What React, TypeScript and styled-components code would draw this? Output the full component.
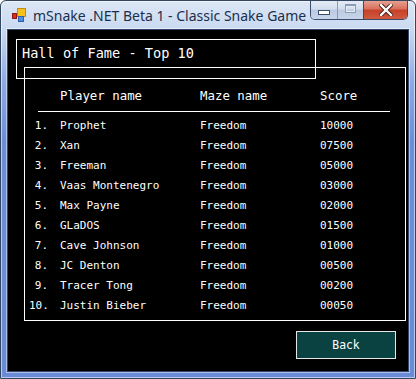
import React from 'react';
import styled, { createGlobalStyle } from 'styled-components';

const GlobalStyle = createGlobalStyle`
  html, body {
    margin: 0;
    padding: 0;
    background: #ffffff;
  }
  * {
    box-sizing: border-box;
  }
`;

const WINDOW = styled.div`
  width: 416px;
  height: 379px;
  border: 1px solid #33465f;
  border-radius: 6px 6px 0 0;
  background: linear-gradient(to bottom, #dde7f5 0px, #c9d9f0 28px, #8eabe4 80px, #6c8ed9 140px, #6a8bd8 100%);
  display: flex;
  flex-direction: column;
  overflow: hidden;
  box-shadow: inset 0 0 0 1px rgba(255, 255, 255, 0.55);
`;

const TITLEBAR = styled.div`
  height: 29px;
  display: flex;
  align-items: flex-start;
  padding: 0 7px 0 10px;
`;

const APPICON = styled.svg`
  width: 16px;
  height: 16px;
  margin-top: 7px;
  flex-shrink: 0;
`;

const TITLE = styled.div`
  margin: 5px 0 0 6px;
  font-family: "Noto Sans", "Open Sans", sans-serif;
  font-size: 14px;
  line-height: 20px;
  color: #1b2f4d;
  white-space: nowrap;
  overflow: hidden;
  flex: 1;
`;

const CAPTIONS = styled.div`
  display: flex;
  height: 20px;
  margin-top: -1px;
  border: 1px solid #3a4c6b;
  border-top: none;
  border-radius: 0 0 5px 5px;
  overflow: hidden;
`;

const CAPBUTTON = styled.div<{ $w: number; $close?: boolean }>`
  width: ${p => p.$w}px;
  height: 100%;
  display: flex;
  align-items: center;
  justify-content: center;
  border-left: ${p => (p.$close ? '1px solid #6b3a35' : '1px solid #8a9bb8')};
  background: ${p =>
    p.$close
      ? 'linear-gradient(to bottom, #e8a697 0%, #d9735f 45%, #c7412a 55%, #cf5a3f 100%)'
      : 'linear-gradient(to bottom, #e6edf7 0%, #d3deee 45%, #bccbe2 55%, #c8d5ea 100%)'};
  box-shadow: inset 0 1px 0 rgba(255, 255, 255, 0.6);
  &:first-child {
    border-left: none;
  }
`;

const MINGLYPH = styled.div`
  width: 12px;
  height: 5px;
  margin-top: 6px;
  background: #ffffff;
  border: 1px solid #3c4d6a;
`;

const MAXGLYPH = styled.div`
  width: 11px;
  height: 9px;
  margin-top: -2px;
  border: 1px solid #8d9cb5;
  border-top-width: 2px;
  box-shadow: inset 0 0 0 1px #e7edf6;
`;

const CLIENT = styled.div`
  margin: 0 7px 7px 7px;
  height: 341px;
  background: #000000;
  display: flex;
  flex-direction: column;
  padding: 9px 12px 12px 8px;
  box-shadow: 0 0 0 1px #34476a, 0 0 0 2px rgba(255, 255, 255, 0.45);
  font-family: "DejaVu Sans Mono", "Liberation Mono", monospace;
  color: #ffffff;
`;

const HEADINGBOX = styled.div`
  width: 300px;
  height: 40px;
  border: 1px solid #ffffff;
  padding: 5px 5px;
  font-size: 13.6px;
  line-height: 16px;
  white-space: nowrap;
`;

const TABLEBOX = styled.div`
  width: 382px;
  height: 254px;
  margin: -12px 0 0 8px;
  border: 1px solid #ffffff;
  padding: 18px 15px 5px 4px;
`;

const ROW = styled.div<{ $head?: boolean }>`
  display: grid;
  grid-template-columns: 31px 140px 120px 1fr;
  height: 20px;
  line-height: 20px;
  font-size: ${p => (p.$head ? '12.4px' : '11px')};
  white-space: nowrap;
`;

const RANK = styled.span`
  text-align: right;
  padding-right: 12px;
`;

const RULE = styled.div`
  height: 1px;
  background: #ffffff;
  margin: 5px 0 4px 9px;
`;

const FOOTER = styled.div`
  display: flex;
  justify-content: flex-end;
  margin-top: 10px;
`;

const BACKBUTTON = styled.button`
  width: 100px;
  height: 28px;
  background: #0a4242;
  border: 1px solid #e6e6e6;
  color: #ffffff;
  font-family: "DejaVu Sans Mono", "Liberation Mono", monospace;
  font-size: 11.4px;
  padding: 0;
  cursor: pointer;
`;

const scores = [
  { name: 'Prophet', maze: 'Freedom', score: '10000' },
  { name: 'Xan', maze: 'Freedom', score: '07500' },
  { name: 'Freeman', maze: 'Freedom', score: '05000' },
  { name: 'Vaas Montenegro', maze: 'Freedom', score: '03000' },
  { name: 'Max Payne', maze: 'Freedom', score: '02000' },
  { name: 'GLaDOS', maze: 'Freedom', score: '01500' },
  { name: 'Cave Johnson', maze: 'Freedom', score: '01000' },
  { name: 'JC Denton', maze: 'Freedom', score: '00500' },
  { name: 'Tracer Tong', maze: 'Freedom', score: '00200' },
  { name: 'Justin Bieber', maze: 'Freedom', score: '00050' },
];

const App = () => {
  return (
    <>
      <GlobalStyle />
      <WINDOW>
        <TITLEBAR>
          <APPICON viewBox="0 0 16 16">
            <rect x="6.5" y="0.5" width="8" height="8" fill="#f5c21b" stroke="#c98a10" />
            <rect x="7.5" y="8.5" width="5" height="5" fill="#4f8de0" stroke="#2d5fb0" />
            <rect x="1.5" y="5.5" width="4" height="5" fill="#d92b22" stroke="#8f1512" />
          </APPICON>
          <TITLE>mSnake .NET Beta 1 - Classic Snake Game</TITLE>
          <CAPTIONS>
            <CAPBUTTON $w={26}>
              <MINGLYPH />
            </CAPBUTTON>
            <CAPBUTTON $w={26}>
              <MAXGLYPH />
            </CAPBUTTON>
            <CAPBUTTON $w={44} $close>
              <svg width="14" height="12" viewBox="0 0 14 12">
                <path
                  d="M2 1 L12 11 M12 1 L2 11"
                  stroke="#4a1a14"
                  strokeWidth="4.2"
                  strokeLinecap="square"
                />
                <path
                  d="M2 1 L12 11 M12 1 L2 11"
                  stroke="#ffffff"
                  strokeWidth="2.4"
                  strokeLinecap="square"
                />
              </svg>
            </CAPBUTTON>
          </CAPTIONS>
        </TITLEBAR>
        <CLIENT>
          <HEADINGBOX>Hall of Fame - Top 10</HEADINGBOX>
          <TABLEBOX>
            <ROW $head>
              <RANK />
              <span>Player name</span>
              <span>Maze name</span>
              <span>Score</span>
            </ROW>
            <RULE />
            {scores.map((s, i) => (
              <ROW key={s.name}>
                <RANK>{i + 1}.</RANK>
                <span>{s.name}</span>
                <span>{s.maze}</span>
                <span>{s.score}</span>
              </ROW>
            ))}
          </TABLEBOX>
          <FOOTER>
            <BACKBUTTON>Back</BACKBUTTON>
          </FOOTER>
        </CLIENT>
      </WINDOW>
    </>
  );
};

export default App;
